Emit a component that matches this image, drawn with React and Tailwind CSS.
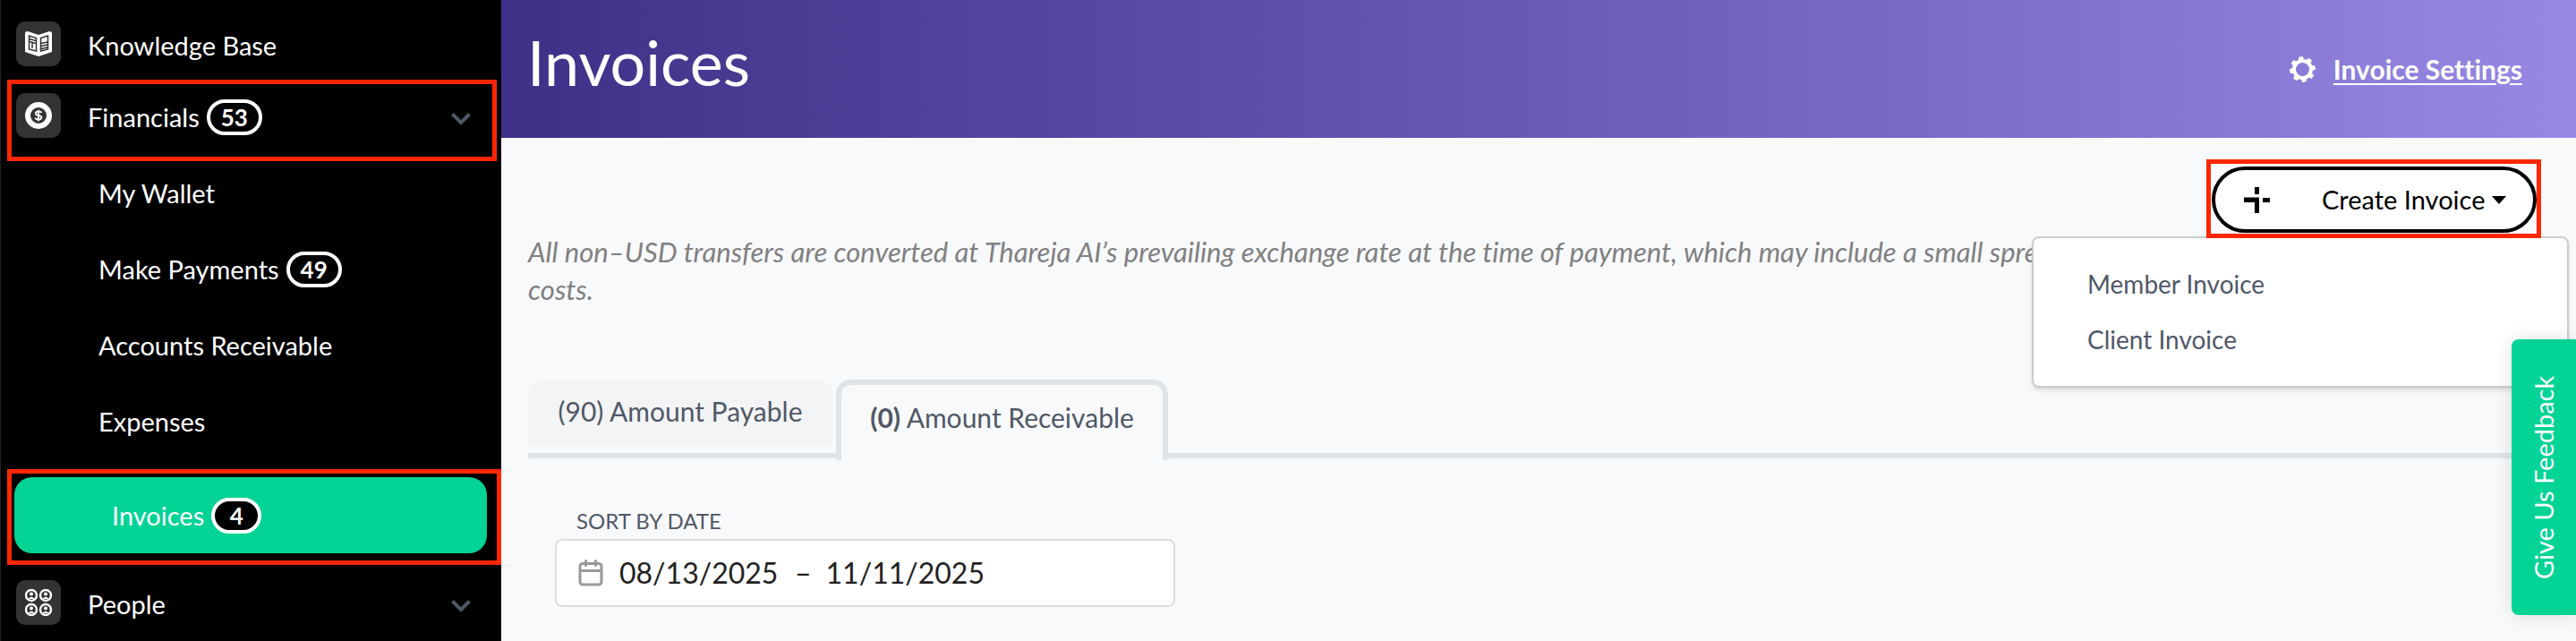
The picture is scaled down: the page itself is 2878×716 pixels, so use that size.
import { useState } from 'react';

const FINANCIAL_LINKS = [
  { label: 'My Wallet' },
  { label: 'Make Payments', count: 49 },
  { label: 'Accounts Receivable' },
  { label: 'Expenses' },
];

// --- Icons ---
function BookIcon() {
  return (
    <svg width="30" height="30" viewBox="0 0 30 30" aria-hidden="true">
      <path d="M0 3 Q0 1 3 1 L15 5 L27 1 Q30 1 30 3 V24 L15 29 L0 24 Z" fill="#fff" />
      <g fill="none" stroke="#333" strokeWidth="1.5">
        <path d="M4.5 6 L12.5 8.5 V23 L4.5 21 Z" />
        <path d="M25.5 6 L17.5 8.5 V23 L25.5 21 Z" />
        <path d="M5 9.5 L12 11.5 M5 12.5 L12 14.5 M8 14 V20" />
        <path d="M18 14.5 L25 13 M18 17.5 L25 16 M18 20.5 L25 19" />
      </g>
    </svg>
  );
}

function CoinIcon() {
  return (
    <svg width="30" height="30" viewBox="0 0 30 30" aria-hidden="true">
      <circle cx="15" cy="15" r="12" fill="none" stroke="#fff" strokeWidth="6" />
      <path
        d="M18.2 12.2 C18 10.8 16.8 10.5 15 10.5 C13 10.5 11.8 11.3 11.8 12.7 C11.8 16 18.4 13.8 18.4 17.3 C18.4 18.8 17 19.5 15 19.5 C13 19.5 11.7 18.9 11.6 17.5 M15 8.8 V21.2"
        fill="none"
        stroke="#fff"
        strokeWidth="1.8"
      />
    </svg>
  );
}

function PeopleIcon() {
  const spots = [[7, 7], [23, 7], [7, 23], [23, 23]];
  return (
    <svg width="30" height="30" viewBox="0 0 30 30" aria-hidden="true">
      {spots.map(([x, y]) => (
        <g key={`${x}-${y}`}>
          <circle cx={x} cy={y} r="6" fill="none" stroke="#fff" strokeWidth="2.4" />
          <circle cx={x} cy={y - 1.5} r="2" fill="#fff" />
          <path d={`M${x - 3.5} ${y + 4} Q${x} ${y - 0.5} ${x + 3.5} ${y + 4} Z`} fill="#fff" />
        </g>
      ))}
    </svg>
  );
}

function GearIcon() {
  const teeth = [0, 45, 90, 135, 180, 225, 270, 315];
  return (
    <svg width="29" height="29" viewBox="0 0 29 29" aria-hidden="true">
      <g transform="rotate(-8 14.5 14.5)">
        <circle cx="14.5" cy="14.5" r="9.5" fill="none" stroke="#fff" strokeWidth="4" />
        {teeth.map((a) => (
          <path key={a} d="M11.5 4 L12.2 0.2 H16.8 L17.5 4 Z" fill="#fff" transform={`rotate(${a} 14.5 14.5)`} />
        ))}
      </g>
    </svg>
  );
}

function PlusIcon() {
  return (
    <svg width="29" height="29" viewBox="0 0 29 29" fill="#000" aria-hidden="true">
      <path d="M12 0 H17 V8 H12 Z M0 11.5 H17 V29 H12 V17 H0 Z M21 12 H29 V17 H21 Z" />
    </svg>
  );
}

function CalendarIcon() {
  return (
    <svg width="28" height="30" viewBox="0 0 28 30" fill="none" stroke="#999" strokeWidth="3" strokeLinecap="round" aria-hidden="true">
      <rect x="2" y="4.5" width="24" height="23.5" rx="3" />
      <path d="M2 12.5 H26" strokeLinecap="butt" />
      <path d="M8.5 1.5 V6.5 M19.5 1.5 V6.5" />
    </svg>
  );
}

function ChevronDown() {
  return (
    <svg width="22" height="14" viewBox="0 0 22 14" fill="none" stroke="#4f5866" strokeWidth="4" className="mt-2" aria-hidden="true">
      <path d="M1.5 1.5 L11 11 L20.5 1.5" />
    </svg>
  );
}

// --- Sidebar parts ---
function CountBadge({ children }) {
  return (
    <span className="flex h-10 min-w-14 items-center justify-center rounded-full border-4 border-white bg-black px-3 text-[26px] font-bold leading-none">
      {children}
    </span>
  );
}

function TopItem({ icon, label, count, expandable }) {
  return (
    <a href="#" className="flex h-20 items-center pl-[17px] pr-[34px]">
      <span className="mr-[30px] flex size-[50px] items-center justify-center rounded-[10px] bg-[#333]">{icon}</span>
      <span className="flex flex-1 items-center gap-2 pt-1">
        {label}
        {count && <CountBadge>{count}</CountBadge>}
      </span>
      {expandable && <ChevronDown />}
    </a>
  );
}

function Sidebar() {
  return (
    <nav className="w-[560px] shrink-0 border-l border-[#222] bg-black pt-[9px] text-[29px] leading-9 text-white">
      <TopItem icon={<BookIcon />} label="Knowledge Base" />
      <div className="relative">
        <TopItem icon={<CoinIcon />} label="Financials" count={53} expandable />
        <div className="pointer-events-none absolute top-0 left-[7px] h-[91px] w-[547px] border-[5px] border-[#ff2600]" />
      </div>
      <ul className="pt-1">
        {FINANCIAL_LINKS.map((link) => (
          <li key={link.label}>
            <a href="#" className="flex h-[85px] items-center gap-2 pl-[109px]">
              {link.label}
              {link.count && <CountBadge>{link.count}</CountBadge>}
            </a>
          </li>
        ))}
        <li className="relative mt-5 mb-[15px] pr-4 pl-[15px]">
          <a href="#" aria-current="page" className="flex h-[85px] items-center gap-2 rounded-[20px] bg-[#03d395] pl-[109px]">
            Invoices
            <CountBadge>4</CountBadge>
          </a>
          <div className="pointer-events-none absolute -top-[9px] right-0 left-[7px] h-[107px] border-[5px] border-[#ff2600]" />
        </li>
      </ul>
      <TopItem icon={<PeopleIcon />} label="People" expandable />
    </nav>
  );
}

function CreateInvoiceMenu() {
  const [open, setOpen] = useState(true);

  return (
    <div className="relative z-10">
      <button
        type="button"
        onClick={() => setOpen(!open)}
        aria-expanded={open}
        className="flex h-[74px] w-[363px] items-center rounded-full border-4 border-black bg-white pl-8 text-[29px] text-black"
      >
        <PlusIcon />
        <span className="ml-[58px]">Create Invoice</span>
        <svg width="16" height="9" viewBox="0 0 16 9" className="ml-2" aria-hidden="true">
          <path d="M0 0 H16 L8 9 Z" />
        </svg>
      </button>

      {open && (
        <div className="absolute top-[78px] -right-9 w-[600px] rounded-lg border-2 border-[#cbcccd] bg-white pt-5 pb-[21px] text-[28px] text-[#4f5866] shadow-md">
          <a href="#" className="flex h-[62px] items-center px-[60px]">Member Invoice</a>
          <a href="#" className="flex h-[62px] items-center px-[60px]">Client Invoice</a>
        </div>
      )}
      <div className="pointer-events-none absolute -top-2 -right-[5px] -left-[6px] h-[88px] border-[5px] border-[#ff2600]" />
    </div>
  );
}

function App() {
  const [from, setFrom] = useState('08/13/2025');
  const [to, setTo] = useState('11/11/2025');

  return (
    <div className="relative flex min-h-screen overflow-hidden bg-[#f8f9fb] font-['Lato',sans-serif] [font-variant-ligatures:none]">
      <Sidebar />

      <main className="min-w-0 flex-1">
        {/* Header */}
        <header className="flex h-[154px] items-center justify-between bg-linear-to-r from-[#3f2f87] to-[#9888e4] pr-[60px] pl-[29px] text-white">
          <h1 className="pb-4 text-[70px] leading-20">Invoices</h1>
          <a href="#" className="flex items-center gap-5 text-[30px] font-bold">
            <GearIcon />
            <span className="underline decoration-2 underline-offset-4">Invoice Settings</span>
          </a>
        </header>

        <div className="pt-8 pr-11 pl-[30px]">
          <div className="flex justify-end">
            <CreateInvoiceMenu />
          </div>

          <p className="text-[31px] leading-[42px] text-[#808080] italic">
            All non–USD transfers are converted at Thareja AI’s prevailing exchange rate at the time of payment, which may include a small spread to cover foreign currency conversion costs.
          </p>

          {/* Tabs */}
          <div role="tablist" className="mt-20 flex h-[88px] items-start gap-1 border-b-[6px] border-[#dee4e8] text-[30px] text-[#4f5866]">
            <button type="button" role="tab" aria-selected="false" className="h-[74px] min-w-[340px] rounded-t-2xl bg-[#f3f4f6] px-7 pb-1">
              (90) Amount Payable
            </button>
            <button type="button" role="tab" aria-selected="true" className="h-[90px] min-w-[371px] shrink-0 rounded-t-2xl border-x-[6px] border-t-[6px] border-[#dee4e8] bg-[#f8f9fb] px-7 pb-3">
              <strong>(0)</strong> Amount Receivable
            </button>
          </div>

          {/* Date filter */}
          <div className="mt-[54px] ml-[30px] w-[693px] max-w-full">
            <label htmlFor="date-from" className="mb-1 block pl-6 text-2xl leading-8 text-[#4f5866]">
              SORT BY DATE
            </label>
            <div className="flex h-[76px] items-center rounded-lg border-2 border-[#dcdddf] bg-white pl-6 text-[32px] text-[#222]">
              <CalendarIcon />
              <input id="date-from" value={from} onChange={(e) => setFrom(e.target.value)} className="ml-[18px] w-[196px] outline-none" />
              <span>–</span>
              <input aria-label="End date" value={to} onChange={(e) => setTo(e.target.value)} className="ml-4 w-[196px] outline-none" />
            </div>
          </div>
        </div>
      </main>

      <button
        type="button"
        className="absolute top-[379px] right-0 z-20 flex h-[308px] w-[72px] rotate-180 items-center justify-center rounded-r-lg bg-[#03d395] text-[29px] text-white shadow-[0_0_20px_rgba(0,0,0,0.12)] [writing-mode:vertical-rl]"
      >
        Give Us Feedback
      </button>
    </div>
  );
}

export default App;
